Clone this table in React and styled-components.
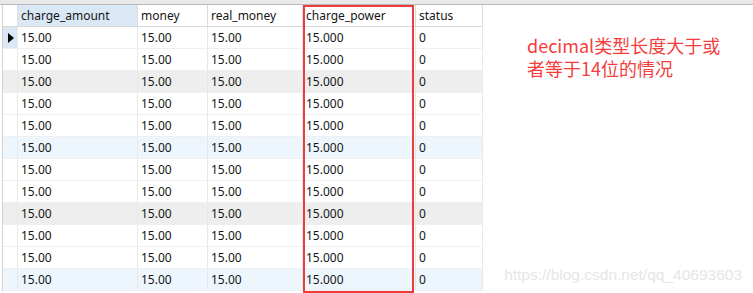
import React from 'react'
import styled, { createGlobalStyle } from 'styled-components'

const GlobalStyle = createGlobalStyle`
  html, body {
    margin: 0;
    padding: 0;
    background: #ffffff;
  }
  * {
    box-sizing: border-box;
  }
`

const Page = styled.div`
  position: relative;
  width: 753px;
  height: 293px;
  overflow: hidden;
  background: #ffffff;
`

const TopStrip = styled.div`
  height: 5px;
  background: #e9e9e9;
  border-bottom: 1px solid #b9b9b9;
`

const Body = styled.div`
  display: flex;
  align-items: flex-start;
  padding-left: 2px;
`

const Grid = styled.div`
  position: relative;
  border-left: 1px solid #d2d2d2;
  font-family: "Noto Sans", "Open Sans", sans-serif;
  font-size: 12px;
  color: #151515;
`

const Row = styled.div`
  display: grid;
  grid-template-columns: 15px 120px 70px 95px 113px 67px;
  height: 22px;
  border-bottom: 1px solid ${props => (props.head ? '#d8d8d8' : '#efefef')};
  background: ${props =>
    props.tone === 'grey' ? '#eeeeee' : props.tone === 'blue' ? '#edf5fd' : '#ffffff'};
`

const Cell = styled.div`
  display: flex;
  align-items: center;
  padding-left: 3px;
  border-right: 1px solid ${props => (props.head ? '#dedede' : '#e8e8e8')};
  background: ${props => (props.active ? '#dae8f6' : 'transparent')};
  white-space: nowrap;
  overflow: hidden;
  line-height: 21px;
`

const Pointer = styled.span`
  width: 0;
  height: 0;
  margin-left: 2px;
  border-top: 5px solid transparent;
  border-bottom: 5px solid transparent;
  border-left: 6px solid #000000;
`

const Highlight = styled.div`
  position: absolute;
  left: 300px;
  top: 0;
  width: 111px;
  height: 288px;
  border: 2px solid #ee3b3b;
  pointer-events: none;
`

const Note = styled.div`
  display: flex;
  flex-direction: column;
  padding: 31px 0 0 44px;
  font-family: "Noto Sans CJK SC", "Noto Sans", sans-serif;
  font-size: 18px;
  color: #f53d3d;
`

const NoteLine = styled.div`
  height: 23px;
  line-height: 18px;
  white-space: nowrap;
`

const Watermark = styled.div`
  position: absolute;
  right: 11px;
  bottom: 9px;
  font-family: "Liberation Sans", Arial, sans-serif;
  font-size: 15.5px;
  color: #e6e6e6;
`

const columns = ['charge_amount', 'money', 'real_money', 'charge_power', 'status']
const rows = Array.from({ length: 12 }, () => ['15.00', '15.00', '15.00', '15.000', '0'])

const toneFor = i => {
  if (i % 3 !== 2) return 'plain'
  return i % 6 === 2 ? 'grey' : 'blue'
}

const App = () => {
  return (
    <Page>
      <GlobalStyle />
      <TopStrip />
      <Body>
        <Grid>
          <Row head>
            <Cell head />
            {columns.map((c, i) => (
              <Cell head key={c} active={i === 0}>{c}</Cell>
            ))}
          </Row>
          {rows.map((r, i) => (
            <Row key={i} tone={toneFor(i)}>
              <Cell active={i === 0}>{i === 0 && <Pointer />}</Cell>
              {r.map((v, j) => (
                <Cell key={j}>{v}</Cell>
              ))}
            </Row>
          ))}
          <Highlight />
        </Grid>
        <Note>
          <NoteLine>decimal类型长度大于或</NoteLine>
          <NoteLine>者等于14位的情况</NoteLine>
        </Note>
      </Body>
      <Watermark>https://blog.csdn.net/qq_40693603</Watermark>
    </Page>
  )
}

export default App
